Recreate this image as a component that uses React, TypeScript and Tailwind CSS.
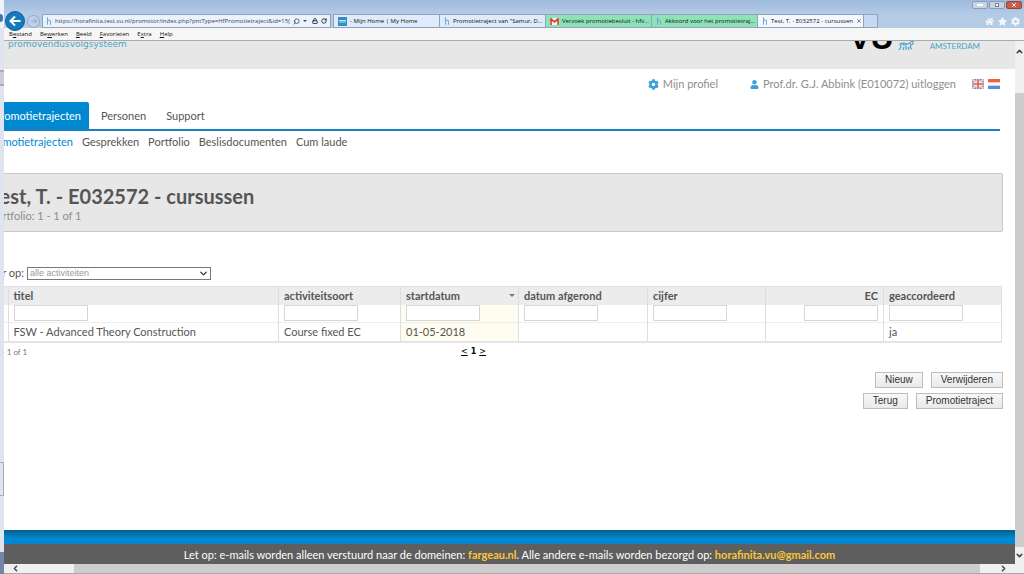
import type { ReactNode } from 'react'
import { ChevronDown, ChevronLeft, ChevronRight, ChevronUp, Lock, RotateCw, Search, X } from 'lucide-react'
import { FaCog, FaHome, FaStar, FaUser } from 'react-icons/fa'

type Column = {
  key: string
  label: string
  width: string
  value: string
  align?: 'right'
  sorted?: boolean
}

const columns: Column[] = [
  { key: 'titel', label: 'titel', width: '', value: 'FSW - Advanced Theory Construction' },
  { key: 'soort', label: 'activiteitsoort', width: 'w-[122px]', value: 'Course fixed EC' },
  { key: 'start', label: 'startdatum', width: 'w-[118px]', value: '01-05-2018', sorted: true },
  { key: 'afgerond', label: 'datum afgerond', width: 'w-[129px]', value: '' },
  { key: 'cijfer', label: 'cijfer', width: 'w-[118px]', value: '' },
  { key: 'ec', label: 'EC', width: 'w-[118px]', value: '', align: 'right' },
  { key: 'akkoord', label: 'geaccordeerd', width: 'w-[118px]', value: 'ja' },
]

const menu = [
  ['B', 'e', 'stand'],
  ['Be', 'w', 'erken'],
  ['', 'B', 'eeld'],
  ['', 'F', 'avorieten'],
  ['E', 'x', 'tra'],
  ['', 'H', 'elp'],
]

function HoraIcon() {
  return (
    <svg viewBox="0 0 8 10" className="h-2 w-1.5 shrink-0" fill="none" stroke="#6fa8dc" strokeWidth="1.4">
      <path d="M2 0v10M2 6c0-3 4-3 4 0v4" />
    </svg>
  )
}

function HomeIcon() {
  return (
    <svg viewBox="0 0 9 9" className="size-[9px] shrink-0">
      <rect width="9" height="9" fill="#2f8fc9" />
      <path d="M1 3.5h7M1 5h7" stroke="#cfe8f7" strokeWidth="0.9" />
    </svg>
  )
}

function MailIcon() {
  return (
    <svg viewBox="0 0 10 8" className="h-[7px] w-[9px] shrink-0">
      <rect width="10" height="8" fill="#f4f4f4" />
      <path d="M1 8V1l4 3.5L9 1v7" fill="none" stroke="#d8392b" strokeWidth="1.8" />
    </svg>
  )
}

function BrowserTab({ icon, color, children }: { icon: ReactNode; color: string; children: ReactNode }) {
  return (
    <button className={`flex w-[106px] items-center gap-[3px] overflow-hidden border border-l-0 border-[#8fa3bb] pr-0.5 pl-1 whitespace-nowrap ${color}`}>
      {icon}
      {children}
    </button>
  )
}

function BrowserBar() {
  return (
    <header className="bg-[#b4cbe6] font-['Open_Sans','Noto_Sans',sans-serif] text-[6px] text-[#111]">
      <div className="flex h-[14px] items-start justify-end gap-px bg-linear-to-b from-[#9db9dc] to-[#b4cbe6] pr-0.5">
        <button aria-label="Minimaliseren" className="mt-px flex h-2 w-4 items-center justify-center rounded-xs border border-[#8d9cb2] bg-[#c5d3e4]">
          <span className="h-[2px] w-1.5 bg-white" />
        </button>
        <button aria-label="Vorig formaat" className="mt-px flex h-2 w-4 items-center justify-center rounded-xs border border-[#8d9cb2] bg-[#c5d3e4]">
          <span className="size-1 border border-[#7b8694] bg-white" />
        </button>
        <button aria-label="Sluiten" className="mt-px flex h-2 w-4 items-center justify-center rounded-xs border border-[#8a4a41] bg-[#cf5b47] text-white">
          <X size={6} strokeWidth={4} />
        </button>
      </div>
      <div className="flex h-[14px]">
        <div className="flex w-[38px] shrink-0 items-center gap-0.5 pl-px">
          <button aria-label="Vorige" className="z-10 -my-1 flex size-5 shrink-0 items-center justify-center rounded-full border border-[#1a5c96] bg-[#1479bd] text-white">
            <svg viewBox="0 0 12 12" className="size-3" fill="none" stroke="currentColor" strokeWidth="2">
              <path d="M6 1.5L1.5 6L6 10.5M1.5 6H11.5" />
            </svg>
          </button>
          <button aria-label="Volgende" className="flex size-[13px] shrink-0 items-center justify-center rounded-full border border-[#8fa8c8] bg-[#bdd1ea] text-[#8fa8c8]">
            <svg viewBox="0 0 12 12" className="size-2" fill="none" stroke="currentColor" strokeWidth="1.5">
              <path d="M6 2l4 4l-4 4M10 6H1" />
            </svg>
          </button>
        </div>
        <div className="flex w-[289px] shrink-0 items-center gap-[3px] border border-[#8fa3bb] bg-[#eaf2fc] px-[3px]">
          <HoraIcon />
          <input
            aria-label="Adres"
            className="min-w-0 flex-1 text-[#444] outline-none"
            defaultValue="https://horafinita.test.vu.nl/promotor/index.php?pntType=HfPromotietraject&id=15("
          />
          <Search size={7} className="-scale-x-100" />
          <span className="border-x-2 border-t-2 border-x-transparent border-t-[#444]" />
          <Lock size={6} strokeWidth={3} className="ml-0.5" />
          <RotateCw size={6} strokeWidth={3} />
        </div>
        <nav aria-label="Tabbladen" className="ml-0.5 flex border-l border-[#8fa3bb]">
          <BrowserTab icon={<HomeIcon />} color="bg-[#dfeafa]">- Mijn Home | My Home</BrowserTab>
          <BrowserTab icon={<HoraIcon />} color="bg-[#dfeafa]">Promotietraject van "Samur, D...</BrowserTab>
          <BrowserTab icon={<MailIcon />} color="bg-[#8ee2b8]">Verzoek promotiebesluit - hfv...</BrowserTab>
          <BrowserTab icon={<HoraIcon />} color="bg-[#8ee2b8]">Akkoord voor het promotietraj...</BrowserTab>
          <BrowserTab icon={<HoraIcon />} color="bg-[#f4f8fe]">
            Test, T. - E032572 - cursussen
            <X size={6} className="ml-auto shrink-0" />
          </BrowserTab>
          <button aria-label="Nieuw tabblad" className="w-[14px] border border-l-0 border-[#8fa3bb] bg-[#c6d9f2]" />
        </nav>
        <div className="ml-auto flex items-center gap-1 pr-1 text-[9px] text-[#f4f7fb]">
          <FaHome />
          <FaStar />
          <FaCog />
        </div>
      </div>
      <nav aria-label="Menu" className="flex h-[13px] items-center gap-2 border-b border-[#aaa] bg-[#f6f6f6] pl-[5px]">
        {menu.map(([before, key, after]) => (
          <button key={before + key + after}>
            {before}
            <u>{key}</u>
            {after}
          </button>
        ))}
      </nav>
    </header>
  )
}

function SiteHeader() {
  return (
    <div className="flex h-7 items-start overflow-hidden bg-[#e7e7e7] pr-[35px] pl-1 text-[#4ba3c7]">
      <span className="-mt-[3px] font-['DejaVu_Sans',sans-serif] text-[9px] leading-3">promovendusvolgsysteem</span>
      <span className="-mt-[19px] ml-auto font-['Liberation_Sans',Arial,sans-serif] text-[32px] leading-8 font-bold text-black">VU</span>
      <svg viewBox="0 0 16 9" className="ml-1 h-[9px] w-4" fill="none" stroke="#4ba3d8" strokeWidth="1.2">
        <path d="M1 9l2-3l-1-3l4-1l3 1l3-1l1 2l-1 2l2 2M5 9l1-3M8 9V5M11 9l-1-3M3 2l3 2l4-1M12 1l3-1v3l-2 1" />
      </svg>
      <span className="ml-4 text-[8px] leading-[11px]">AMSTERDAM</span>
    </div>
  )
}

function UserBar() {
  return (
    <div className="mb-[3px] flex h-[30px] items-center justify-end pr-[3px] text-[#8e8e8e]">
      <a href="#profiel" className="flex items-center gap-1">
        <FaCog size={11} className="text-[#3aa0dc]" />
        Mijn profiel
      </a>
      <a href="#uitloggen" className="ml-8 flex items-center gap-1">
        <FaUser size={9} className="text-[#3aa0dc]" />
        Prof.dr. G.J. Abbink (E010072) uitloggen
      </a>
      <a href="#en" aria-label="English" className="ml-4">
        <svg viewBox="0 0 12 10" className="h-[10px] w-3">
          <rect width="12" height="10" fill="#6f86c4" />
          <path d="M0 0l12 10M12 0L0 10" stroke="#fff" strokeWidth="2" />
          <path d="M0 0l12 10M12 0L0 10" stroke="#e0685c" strokeWidth="0.7" />
          <path d="M6 0v10M0 5h12" stroke="#fff" strokeWidth="3" />
          <path d="M6 0v10M0 5h12" stroke="#e0584c" strokeWidth="1.6" />
        </svg>
      </a>
      <a href="#nl" aria-label="Nederlands" className="ml-1">
        <svg viewBox="0 0 12 10" className="h-[10px] w-3">
          <rect width="12" height="10" fill="#f8f8f8" />
          <rect width="12" height="3.3" fill="#f0623f" />
          <rect y="6.7" width="12" height="3.3" fill="#5b8ae0" />
        </svg>
      </a>
    </div>
  )
}

function ActionButton({ children }: { children: ReactNode }) {
  return (
    <button className="h-4 border border-[#bdbdbd] bg-linear-to-b from-[#f8f8f8] to-[#e9e9e9] px-[9px] font-['Liberation_Sans',Arial,sans-serif] text-[10px] leading-3 text-[#333]">
      {children}
    </button>
  )
}

function ActivityTable() {
  return (
    <div className="mt-[5px] pr-px">
      <table className="w-full table-fixed border-b-2 border-[#e4e4e4] text-left">
        <thead>
          <tr className="h-[18px] border-t border-[#e0e0e0] bg-[#ececec]">
            <th className="w-6" aria-label="selectie" />
            {columns.map((c) => (
              <th key={c.key} className={`border-x border-[#dedede] px-[5px] py-0 font-bold ${c.width} ${c.align === 'right' ? 'text-right' : ''}`}>
                <div className={c.sorted ? 'flex items-center justify-between' : ''}>
                  {c.label}
                  {c.sorted && <span className="-mr-0.5 border-x-[3px] border-t-[3px] border-x-transparent border-t-[#777]" />}
                </div>
              </th>
            ))}
          </tr>
          <tr className="h-[18px] border-b border-[#eeeeee]">
            <td />
            {columns.map((c) => (
              <td key={c.key} className={`border-x border-[#dedede] px-[5px] py-0 ${c.sorted ? 'bg-[#fffcf0]' : ''} ${c.align === 'right' ? 'text-right' : ''}`}>
                <input aria-label={`Filter ${c.label}`} className="block h-4 w-[74px] border border-[#d6d6d6] bg-white in-[.text-right]:ml-auto" />
              </td>
            ))}
          </tr>
        </thead>
        <tbody>
          <tr className="h-[19px]">
            <td />
            {columns.map((c) => (
              <td key={c.key} className={`border-x border-[#dedede] px-[5px] py-0 ${c.sorted ? 'bg-[#fffcf0]' : ''}`}>
                {c.value}
              </td>
            ))}
          </tr>
        </tbody>
      </table>
    </div>
  )
}

export default function App() {
  return (
    <div className="flex h-screen overflow-hidden bg-white font-['Lato',Calibri,sans-serif] text-[11px] leading-4 text-[#555]">
      {/* sliver of the window behind this one */}
      <div className="flex w-1 shrink-0 flex-col overflow-hidden bg-[#dfe4ee]">
        <div className="flex h-7 flex-col justify-center bg-[#eef3fa]">
          <div className="mt-2 h-2 w-[3px] rounded-r-full bg-[#3f73b5]" />
        </div>
        <div className="mt-[42px] h-4 border-y-2 border-[#aab] bg-[#ccd]" />
        <div className="mt-auto h-[34px] border border-l-0 border-[#a5a9b5]" />
        <div className="h-14" />
        <div className="h-[22px] bg-[#7486a5]" />
      </div>

      <div className="flex min-w-0 flex-1 flex-col">
        <BrowserBar />

        <div className="flex min-h-0 flex-1">
          <div className="flex min-w-0 flex-1 flex-col overflow-hidden">
            <SiteHeader />

            <main className="-ml-5 flex-1 pr-3">
              <UserBar />

              <nav className="mr-[3px] flex items-stretch border-b-2 border-[#1b7fc4]">
                <a href="#promotietrajecten" className="flex h-[27px] w-[105px] items-center justify-end rounded-t-xs bg-[#0089d0] pr-2 text-white">
                  Promotietrajecten
                </a>
                <a href="#personen" className="ml-3 flex items-center">Personen</a>
                <a href="#support" className="ml-5 flex items-center">Support</a>
              </nav>
              <nav className="mt-[3px] flex gap-[9px]">
                <a href="#trajecten" className="flex w-[89px] justify-end text-[#0089d0]">Promotietrajecten</a>
                <a href="#gesprekken">Gesprekken</a>
                <a href="#portfolio">Portfolio</a>
                <a href="#beslisdocumenten">Beslisdocumenten</a>
                <a href="#cumlaude">Cum laude</a>
              </nav>

              <section className="mt-[23px] h-[59px] rounded-xs border border-[#c8c8c8] bg-[#e7e7e7] pt-3 pl-[5px]">
                <h1 className="text-[20px] leading-5 font-bold">Test, T. - E032572 - cursussen</h1>
                <p className="mt-0.5 text-[#8e8e8e]">Portfolio: 1 - 1 of 1</p>
              </section>

              <div className="mt-[33px] flex items-center gap-[3px]">
                <label htmlFor="filter" className="flex w-10 justify-end whitespace-nowrap">Filter op:</label>
                <div className="relative flex">
                  <select id="filter" className="h-[13px] w-[184px] appearance-none border border-[#777] bg-white pl-0.5 font-['Liberation_Sans',Arial,sans-serif] text-[9px] leading-[11px] text-[#999]">
                    <option>alle activiteiten</option>
                  </select>
                  <ChevronDown size={11} strokeWidth={3} className="pointer-events-none absolute top-px right-0.5 text-[#333]" />
                </div>
              </div>

              <ActivityTable />

              <div className="mt-[3px] grid grid-cols-3 text-[8px] leading-3">
                <span className="pl-[11px] text-[#777]">1 - 1 of 1</span>
                <span className="flex justify-center gap-[3px] pr-10 font-['DejaVu_Sans',sans-serif] text-black">
                  <a href="#vorige" className="underline">&lt;</a>
                  <b>1</b>
                  <a href="#volgende" className="underline">&gt;</a>
                </span>
              </div>

              <div className="mt-[14px] flex justify-end gap-2">
                <ActionButton>Nieuw</ActionButton>
                <ActionButton>Verwijderen</ActionButton>
              </div>
              <div className="mt-[5px] flex justify-end gap-2">
                <ActionButton>Terug</ActionButton>
                <ActionButton>Promotietraject</ActionButton>
              </div>
            </main>

            <footer>
              <div className="h-[14px] bg-linear-to-b from-[#04608f] to-[#0089d0] to-60%" />
              <p className="bg-[#5e5e5e] pt-[3px] pb-px text-center text-white">
                Let op: e-mails worden alleen verstuurd naar de domeinen: <b className="text-[#fbc636]">fargeau.nl</b>. Alle andere e-mails worden
                bezorgd op: <b className="text-[#fbc636]">horafinita.vu@gmail.com</b>
              </p>
            </footer>
          </div>

          <div className="flex w-[9px] flex-col items-center bg-[#f0f0f0] text-[#444]">
            <ChevronUp size={9} strokeWidth={4} className="mt-1.5 mb-[37px]" />
            <div className="w-full flex-1 bg-[#cdcdcd]" />
            <ChevronDown size={9} strokeWidth={4} className="my-1" />
          </div>
        </div>

        <div className="flex h-[10px] items-center border-b border-[#aaa] bg-[#f0f0f0] text-[#444]">
          <ChevronLeft size={9} strokeWidth={4} className="mr-[54px] ml-[7px]" />
          <div className="h-full flex-1 bg-[#cdcdcd]" />
          <ChevronRight size={9} strokeWidth={4} className="mr-4 ml-[19px]" />
        </div>
      </div>
    </div>
  )
}
